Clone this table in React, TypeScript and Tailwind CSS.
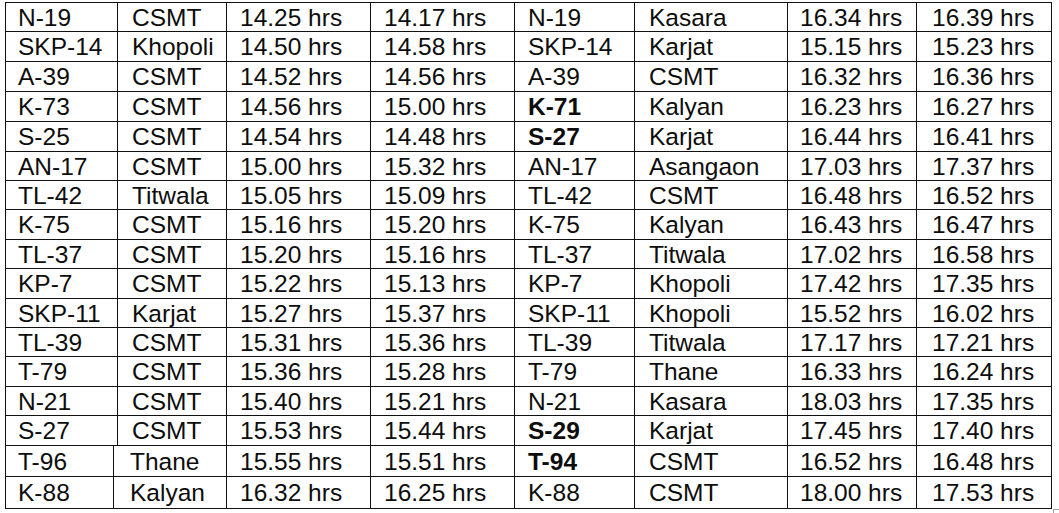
import React from "react";

type Cell = {
  text: string;
  bold?: boolean;
};

type Row = {
  h: string;
  narrowFirst?: boolean;
  cells: Cell[];
};

const colWidths = [
  "w-[112px] pl-[12px]",
  "w-[109px] pl-[14px]",
  "w-[144px] pl-[13px]",
  "w-[144px] pl-[13px]",
  "w-[120px] pl-[13px]",
  "w-[153px] pl-[14px]",
  "w-[129px] pl-[12px]",
  "w-[135px] pl-[15px]",
];

const narrowWidths = ["w-[108px] pl-[12px]", "w-[113px] pl-[16px]"];

const mk = (arr: (string | [string])[]): Cell[] =>
  arr.map((c) => (typeof c === "string" ? { text: c } : { text: c[0], bold: true }));

const rows: Row[] = [
  { h: "h-[29px]", cells: mk(["N-19", "CSMT", "14.25 hrs", "14.17 hrs", "N-19", "Kasara", "16.34 hrs", "16.39 hrs"]) },
  { h: "h-[30px]", cells: mk(["SKP-14", "Khopoli", "14.50 hrs", "14.58 hrs", "SKP-14", "Karjat", "15.15 hrs", "15.23 hrs"]) },
  { h: "h-[30px]", cells: mk(["A-39", "CSMT", "14.52 hrs", "14.56 hrs", "A-39", "CSMT", "16.32 hrs", "16.36 hrs"]) },
  { h: "h-[30px]", cells: mk(["K-73", "CSMT", "14.56 hrs", "15.00 hrs", ["K-71"], "Kalyan", "16.23 hrs", "16.27 hrs"]) },
  { h: "h-[30px]", cells: mk(["S-25", "CSMT", "14.54 hrs", "14.48 hrs", ["S-27"], "Karjat", "16.44 hrs", "16.41 hrs"]) },
  { h: "h-[29px]", cells: mk(["AN-17", "CSMT", "15.00 hrs", "15.32 hrs", "AN-17", "Asangaon", "17.03 hrs", "17.37 hrs"]) },
  { h: "h-[29px]", cells: mk(["TL-42", "Titwala", "15.05 hrs", "15.09 hrs", "TL-42", "CSMT", "16.48 hrs", "16.52 hrs"]) },
  { h: "h-[30px]", cells: mk(["K-75", "CSMT", "15.16 hrs", "15.20 hrs", "K-75", "Kalyan", "16.43 hrs", "16.47 hrs"]) },
  { h: "h-[29px]", cells: mk(["TL-37", "CSMT", "15.20 hrs", "15.16 hrs", "TL-37", "Titwala", "17.02 hrs", "16.58 hrs"]) },
  { h: "h-[30px]", cells: mk(["KP-7", "CSMT", "15.22 hrs", "15.13 hrs", "KP-7", "Khopoli", "17.42 hrs", "17.35 hrs"]) },
  { h: "h-[29px]", cells: mk(["SKP-11", "Karjat", "15.27 hrs", "15.37 hrs", "SKP-11", "Khopoli", "15.52 hrs", "16.02 hrs"]) },
  { h: "h-[29px]", cells: mk(["TL-39", "CSMT", "15.31 hrs", "15.36 hrs", "TL-39", "Titwala", "17.17 hrs", "17.21 hrs"]) },
  { h: "h-[30px]", cells: mk(["T-79", "CSMT", "15.36 hrs", "15.28 hrs", "T-79", "Thane", "16.33 hrs", "16.24 hrs"]) },
  { h: "h-[29px]", cells: mk(["N-21", "CSMT", "15.40 hrs", "15.21 hrs", "N-21", "Kasara", "18.03 hrs", "17.35 hrs"]) },
  { h: "h-[30px]", cells: mk(["S-27", "CSMT", "15.53 hrs", "15.44 hrs", ["S-29"], "Karjat", "17.45 hrs", "17.40 hrs"]) },
  { h: "h-[31px]", narrowFirst: true, cells: mk(["T-96", "Thane", "15.55 hrs", "15.51 hrs", ["T-94"], "CSMT", "16.52 hrs", "16.48 hrs"]) },
  { h: "h-[32px]", narrowFirst: true, cells: mk(["K-88", "Kalyan", "16.32 hrs", "16.25 hrs", "K-88", "CSMT", "18.00 hrs", "17.53 hrs"]) },
];

const TimetableRow = ({ row }: { row: Row }) => {
  return (
    <div className={`flex border-b border-[#111] ${row.h}`}>
      {row.cells.map((cell, i) => {
        const w = row.narrowFirst && i < 2 ? narrowWidths[i] : colWidths[i];
        return (
          <div
            key={i}
            className={`${w} shrink-0 h-full border-r border-[#111] flex items-center pt-[2px] whitespace-nowrap ${
              cell.bold ? "font-bold" : ""
            }`}
          >
            {cell.text}
          </div>
        );
      })}
    </div>
  );
};

export default function App() {
  return (
    <div className="relative w-[1059px] h-[513px] overflow-hidden bg-white text-[#0d0d0d] font-['Liberation_Sans',Arial,sans-serif] text-[24.5px] leading-none">
      <div className="ml-[5px] mt-[2px] w-[1047px] border-l border-t border-[#111]">
        {rows.map((row, idx) => (
          <TimetableRow key={idx} row={row} />
        ))}
      </div>
      <div className="absolute left-[1053px] top-[509px] w-[10px] h-[10px] border-l border-t border-[#a0a0a0]"></div>
    </div>
  );
}
